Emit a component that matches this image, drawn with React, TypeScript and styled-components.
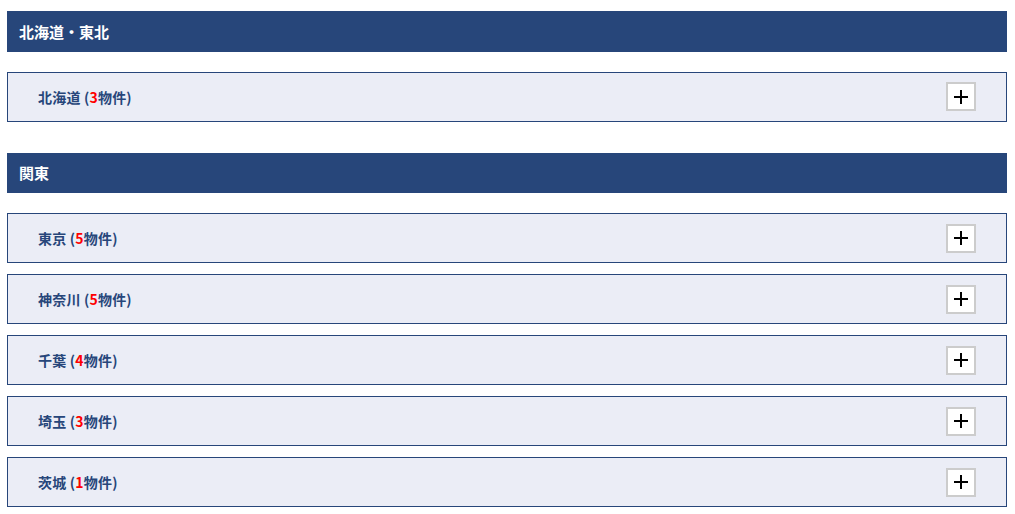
import React from "react";
import { FC } from "react";
import styled, { createGlobalStyle } from "styled-components";

type Area = {
    name: string
    count: number
}

type Region = {
    title: string
    areas: Area[]
}

const regions: Region[] = [
    { title: "北海道・東北", areas: [{ name: "北海道", count: 3 }] },
    {
        title: "関東",
        areas: [
            { name: "東京", count: 5 },
            { name: "神奈川", count: 5 },
            { name: "千葉", count: 4 },
            { name: "埼玉", count: 3 },
            { name: "茨城", count: 1 },
        ],
    },
];

const AreaRow: FC<{ area: Area }> = ({ area }) => {
    return (
        <Row>
            <Label>
                {area.name} (<Count>{area.count}</Count>物件)
            </Label>
            <Toggle aria-label="開く">
                <svg width="14" height="14" viewBox="0 0 14 14">
                    <path d="M7 0v14M0 7h14" stroke="#000" strokeWidth="2" />
                </svg>
            </Toggle>
        </Row>
    )
}

const App: FC = () => {
    return (
        <>
            <GlobalStyle />
            <Page>
                {regions.map((region) => (
                    <Section key={region.title}>
                        <Heading>{region.title}</Heading>
                        <List>
                            {region.areas.map((area) => (
                                <AreaRow key={area.name} area={area} />
                            ))}
                        </List>
                    </Section>
                ))}
            </Page>
        </>
    )
}

const GlobalStyle = createGlobalStyle`
    body {
        margin: 0;
        background: #fff;
        font-family: "Noto Sans CJK JP", "Noto Sans", sans-serif;
    }
`

const Page = styled.div`
    display: flex;
    flex-direction: column;
    gap: 31px;
    width: 1000px;
    padding: 11px 0 0 7px;
`

const Section = styled.section`
    display: flex;
    flex-direction: column;
    gap: 20px;
`

const Heading = styled.h2`
    margin: 0;
    height: 40.5px;
    display: flex;
    align-items: center;
    padding: 0 12px;
    background-color: #27467a;
    color: #fff;
    font-size: 15px;
    font-weight: 700;
`

const List = styled.div`
    display: flex;
    flex-direction: column;
    gap: 11px;
`

const Row = styled.div`
    box-sizing: border-box;
    height: 50px;
    display: flex;
    align-items: center;
    justify-content: space-between;
    padding: 0 30px 0 30px;
    background-color: #ebedf6;
    border: 1px solid #27467a;
`

const Label = styled.div`
    color: #27467a;
    font-size: 14px;
    font-weight: 700;
    letter-spacing: 0.2px;
`

const Count = styled.span`
    color: #f00;
`

const Toggle = styled.button`
    box-sizing: border-box;
    width: 30px;
    height: 29px;
    padding: 0;
    display: flex;
    align-items: center;
    justify-content: center;
    background: #fff;
    border: 2px solid #ccc;
    cursor: pointer;
`

export default App;
